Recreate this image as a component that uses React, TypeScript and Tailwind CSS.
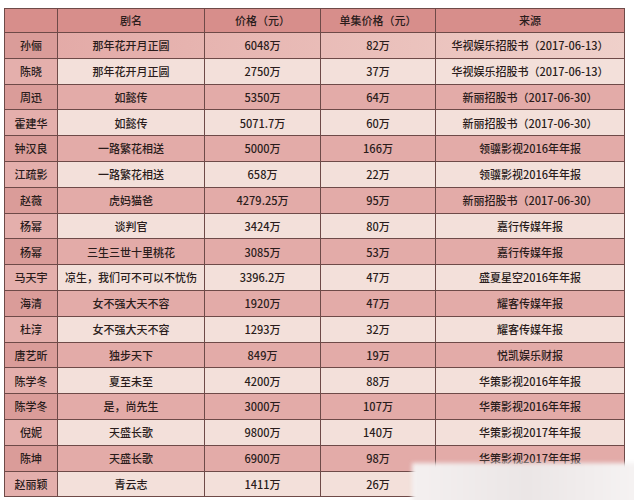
import React from 'react';

type Row = { name: string; drama: string; price: string; per: string; source: string };

const rows: Row[] = [
  { name: '孙俪', drama: '那年花开月正圆', price: '6048万', per: '82万', source: '华视娱乐招股书（2017-06-13）' },
  { name: '陈晓', drama: '那年花开月正圆', price: '2750万', per: '37万', source: '华视娱乐招股书（2017-06-13）' },
  { name: '周迅', drama: '如懿传', price: '5350万', per: '64万', source: '新丽招股书（2017-06-30）' },
  { name: '霍建华', drama: '如懿传', price: '5071.7万', per: '60万', source: '新丽招股书（2017-06-30）' },
  { name: '钟汉良', drama: '一路繁花相送', price: '5000万', per: '166万', source: '领骥影视2016年年报' },
  { name: '江疏影', drama: '一路繁花相送', price: '658万', per: '22万', source: '领骥影视2016年年报' },
  { name: '赵薇', drama: '虎妈猫爸', price: '4279.25万', per: '95万', source: '新丽招股书（2017-06-30）' },
  { name: '杨幂', drama: '谈判官', price: '3424万', per: '80万', source: '嘉行传媒年报' },
  { name: '杨幂', drama: '三生三世十里桃花', price: '3085万', per: '53万', source: '嘉行传媒年报' },
  { name: '马天宇', drama: '凉生，我们可不可以不忧伤', price: '3396.2万', per: '47万', source: '盛夏星空2016年年报' },
  { name: '海清', drama: '女不强大天不容', price: '1920万', per: '47万', source: '耀客传媒年报' },
  { name: '杜淳', drama: '女不强大天不容', price: '1293万', per: '32万', source: '耀客传媒年报' },
  { name: '唐艺昕', drama: '独步天下', price: '849万', per: '19万', source: '悦凯娱乐财报' },
  { name: '陈学冬', drama: '夏至未至', price: '4200万', per: '88万', source: '华策影视2016年年报' },
  { name: '陈学冬', drama: '是，尚先生', price: '3000万', per: '107万', source: '华策影视2016年年报' },
  { name: '倪妮', drama: '天盛长歌', price: '9800万', per: '140万', source: '华策影视2017年年报' },
  { name: '陈坤', drama: '天盛长歌', price: '6900万', per: '98万', source: '华策影视2017年年报' },
  { name: '赵丽颖', drama: '青云志', price: '1411万', per: '26万', source: '' },
];

const cell = 'border border-[#6e4a48] text-center align-middle p-0 whitespace-nowrap';

export default function App() {
  return (
    <div
      className="relative w-[634px] h-[500px] overflow-hidden bg-white pl-[4px] pt-[8px] text-[11px] font-medium text-[#2a1c1b]"
      style={{ fontFamily: '"Noto Sans CJK SC", "Liberation Sans", sans-serif' }}
    >
      <table className="border-collapse table-fixed w-[620px]">
        <colgroup>
          <col className="w-[53px]" />
          <col className="w-[147px]" />
          <col className="w-[116px]" />
          <col className="w-[115px]" />
          <col className="w-[189px]" />
        </colgroup>
        <thead>
          <tr className="h-[24px] bg-[#d78e8b]">
            <th className={`${cell} font-medium`}></th>
            <th className={`${cell} font-medium`}>剧名</th>
            <th className={`${cell} font-medium`}>价格（元）</th>
            <th className={`${cell} font-medium`}>单集价格（元）</th>
            <th className={`${cell} font-medium`}>来源</th>
          </tr>
        </thead>
        <tbody>
          {rows.map((r, i) => {
            // first row fades from pink to light, then light / pink alternate
            const dark = i !== 0 && i % 2 === 0;
            const rowBg =
              i === 0
                ? 'bg-gradient-to-r from-[#e2a7a4] to-[#efd0ca]'
                : dark
                  ? 'bg-[#e3aba8]'
                  : 'bg-[#f3e0da]';
            const nameBg = dark || i === 0 ? 'bg-[#da9c99]' : 'bg-[#e4afac]';
            return (
              <tr key={i} className={`h-[25.8px] ${rowBg}`}>
                <td className={`${cell} ${nameBg}`}>{r.name}</td>
                <td className={cell}>{r.drama}</td>
                <td className={cell}>{r.price}</td>
                <td className={cell}>{r.per}</td>
                <td className={cell}>{r.source}</td>
              </tr>
            );
          })}
        </tbody>
      </table>
      {/* blurred watermark box at the bottom right */}
      <div className="absolute left-[412px] top-[463px] w-[230px] h-[45px] bg-gradient-to-r from-[#f4f0f0] via-[#ebe6e6] to-[#f6f3f3] blur-[2px]" />
    </div>
  );
}
